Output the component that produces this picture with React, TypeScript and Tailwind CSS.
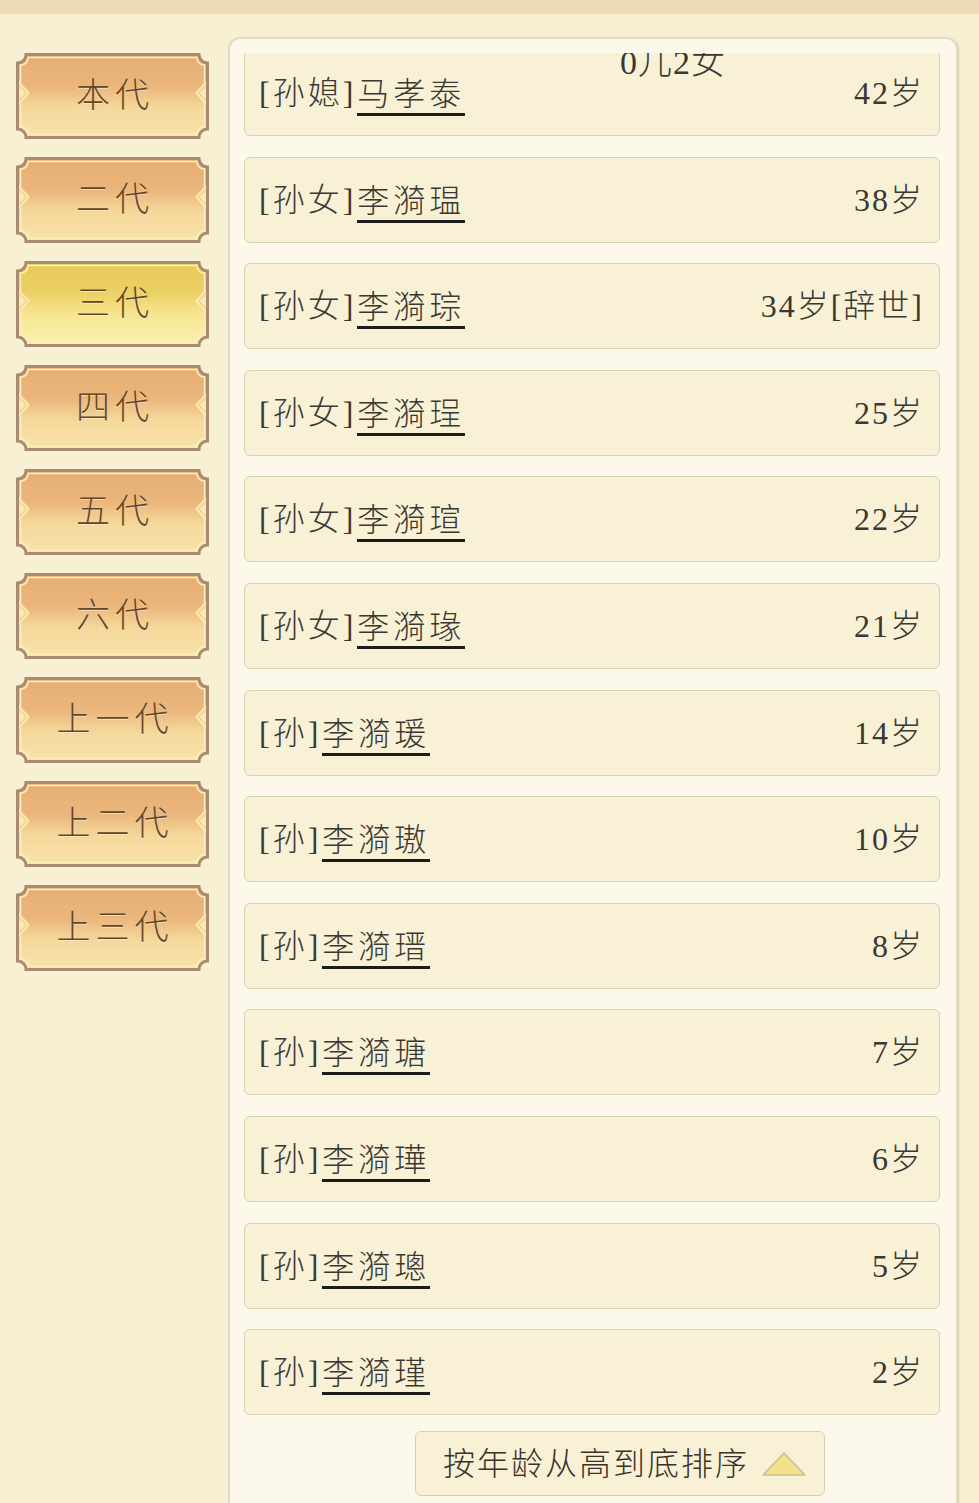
import React from "react";

const FONT = "font-['Liberation_Serif','Noto_Sans_CJK_SC',serif]";

const gens = [
  { label: "本代", active: false },
  { label: "二代", active: false },
  { label: "三代", active: true },
  { label: "四代", active: false },
  { label: "五代", active: false },
  { label: "六代", active: false },
  { label: "上一代", active: false },
  { label: "上二代", active: false },
  { label: "上三代", active: false },
];

const rows = [
  { rel: "[孙媳]", name: "马孝泰", age: "42岁" },
  { rel: "[孙女]", name: "李漪瑥", age: "38岁" },
  { rel: "[孙女]", name: "李漪琮", age: "34岁[辞世]" },
  { rel: "[孙女]", name: "李漪珵", age: "25岁" },
  { rel: "[孙女]", name: "李漪瑄", age: "22岁" },
  { rel: "[孙女]", name: "李漪瑑", age: "21岁" },
  { rel: "[孙]", name: "李漪瑗", age: "14岁" },
  { rel: "[孙]", name: "李漪璈", age: "10岁" },
  { rel: "[孙]", name: "李漪瑨", age: "8岁" },
  { rel: "[孙]", name: "李漪瑭", age: "7岁" },
  { rel: "[孙]", name: "李漪璍", age: "6岁" },
  { rel: "[孙]", name: "李漪璁", age: "5岁" },
  { rel: "[孙]", name: "李漪瑾", age: "2岁" },
];

function GenButton({ label, active, idx }: { label: string; active: boolean; idx: number }) {
  const gid = `g${idx}`;
  return (
    <div className="relative w-[193px] h-[86px] flex items-center justify-center">
      <svg className="absolute inset-0" width="193" height="86" viewBox="0 0 193 86">
        <defs>
          <linearGradient id={gid} x1="0" y1="0" x2="0" y2="1">
            {active ? (
              <>
                <stop offset="0" stopColor="#e7c95a" />
                <stop offset="0.38" stopColor="#ebd166" />
                <stop offset="0.62" stopColor="#f6e690" />
                <stop offset="1" stopColor="#fbf2b0" />
              </>
            ) : (
              <>
                <stop offset="0" stopColor="#e6ad72" />
                <stop offset="0.38" stopColor="#eab67c" />
                <stop offset="0.65" stopColor="#f5d89c" />
                <stop offset="1" stopColor="#f8e4a8" />
              </>
            )}
          </linearGradient>
        </defs>
        <path
          d="M10,1.5 H183 A8.5,8.5 0 0 0 191.5,10 V76 A8.5,8.5 0 0 0 183,84.5 H10 A8.5,8.5 0 0 0 1.5,76 V10 A8.5,8.5 0 0 0 10,1.5 Z"
          fill={`url(#${gid})`}
          stroke="#a98b73"
          strokeWidth="3"
        />
        <path
          d="M12,4.5 H181 A7,7 0 0 0 188.5,12 V74 A7,7 0 0 0 181,81.5 H12 A7,7 0 0 0 4.5,74 V12 A7,7 0 0 0 12,4.5 Z"
          fill="none"
          stroke="#fdeebc"
          strokeWidth="1.5"
        />
        <polygon points="3,28 14,40 3,52" fill="#fbe9b4" />
        <polyline points="3,32 10.5,40 3,48" fill="none" stroke="#f3d08e" strokeWidth="1.2" />
        <polygon points="190,28 179,40 190,52" fill="#fbe9b4" />
        <polyline points="190,32 182.5,40 190,48" fill="none" stroke="#f3d08e" strokeWidth="1.2" />
      </svg>
      <span
        className={`relative ${FONT} font-light text-[34px] leading-none tracking-[5px] pl-[5px] text-[#644629] [text-shadow:0_1px_0_rgba(255,245,210,0.6)] -mt-[1px]`}
      >
        {label}
      </span>
    </div>
  );
}

function Row({ rel, name, age, first }: { rel: string; name: string; age: string; first?: boolean }) {
  return (
    <div
      className={`relative shrink-0 h-[86px] rounded-[6px] border-[1.5px] border-[#dad1b0] bg-[#f8f1d6] flex items-center justify-between pl-[14px] pr-[15px] ${
        first ? "-mt-[3px]" : ""
      }`}
    >
      {first && (
        <span
          className={`absolute left-[375px] top-[-5px] ${FONT} font-light text-[34px] leading-none tracking-[1px] text-[#3a3732]`}
        >
          0儿2女
        </span>
      )}
      <div className={`flex items-center ${FONT} font-light text-[32px] leading-none tracking-[3px] text-[#3b3833]`}>
        <span className="mr-[1px]">{rel}</span>
        <span className="border-b-[3px] border-[#1e1c1a] pt-[3px] pb-[3px] mt-[5px] tracking-[4px]">{name}</span>
      </div>
      <div className={`${FONT} font-light text-[32px] leading-none tracking-[2px] text-[#3b3833]`}>{age}</div>
    </div>
  );
}

export default function App() {
  return (
    <div className="w-[979px] h-[1503px] overflow-hidden bg-[#f7f0d3] flex flex-col">
      <div className="h-[14px] shrink-0 bg-[#ecdab3]" />
      <div className="flex flex-1 min-h-0">
        <div className="w-[228px] shrink-0 pl-[16px] pt-[39px] flex flex-col gap-[18px]">
          {gens.map((g, i) => (
            <GenButton key={g.label} label={g.label} active={g.active} idx={i} />
          ))}
        </div>
        <div className="flex-1 mr-[21px] mt-[23px] rounded-t-[12px] border-2 border-b-0 border-[#e2dbc4] bg-[#fcf9ea] shadow-[1px_1px_2px_rgba(120,100,60,0.25)] pt-[14px] pl-[14px] pr-[16px] flex flex-col">
          <div className="overflow-hidden flex flex-col gap-[20.6px] pb-[1px]">
            {rows.map((r, i) => (
              <Row key={r.name} rel={r.rel} name={r.name} age={r.age} first={i === 0} />
            ))}
          </div>
          <div className="mt-[15px] ml-[171px] w-[410px] h-[65px] shrink-0 rounded-[6px] border-[1.5px] border-[#d8cfae] bg-[#f8f1d6] flex items-center pl-[27px] gap-[12px]">
            <span className={`${FONT} font-light text-[32px] leading-none tracking-[2px] text-[#3a3128]`}>
              按年龄从高到底排序
            </span>
            <svg width="46" height="26" viewBox="0 0 46 26">
              <polygon points="23,2 44,24 2,24" fill="#f4e189" stroke="#c9bd97" strokeWidth="1.5" strokeLinejoin="round" />
            </svg>
          </div>
        </div>
      </div>
    </div>
  );
}
